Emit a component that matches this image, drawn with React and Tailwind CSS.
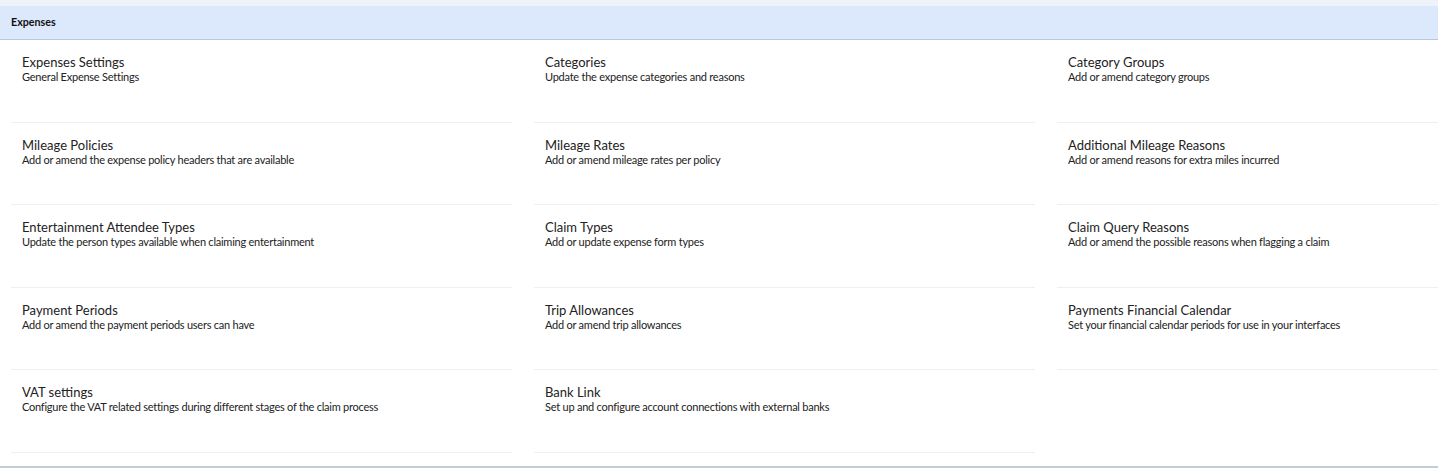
const items = [
  ["Expenses Settings", "General Expense Settings"],
  ["Categories", "Update the expense categories and reasons"],
  ["Category Groups", "Add or amend category groups"],
  ["Mileage Policies", "Add or amend the expense policy headers that are available"],
  ["Mileage Rates", "Add or amend mileage rates per policy"],
  ["Additional Mileage Reasons", "Add or amend reasons for extra miles incurred"],
  ["Entertainment Attendee Types", "Update the person types available when claiming entertainment"],
  ["Claim Types", "Add or update expense form types"],
  ["Claim Query Reasons", "Add or amend the possible reasons when flagging a claim"],
  ["Payment Periods", "Add or amend the payment periods users can have"],
  ["Trip Allowances", "Add or amend trip allowances"],
  ["Payments Financial Calendar", "Set your financial calendar periods for use in your interfaces"],
  ["VAT settings", "Configure the VAT related settings during different stages of the claim process"],
  ["Bank Link", "Set up and configure account connections with external banks"],
];

export default function App() {
  return (
    <div className="w-[1438px] h-[471px] overflow-hidden bg-white font-['Lato','Liberation_Sans',sans-serif] text-[#1f1f1f]">
      <div className="h-[6px] bg-[#eef2f9]" />
      <div className="h-[34px] bg-[#dce8fb] border-b border-[#b9c7dc] flex items-center px-[11px]">
        <span className="text-[10.7px] font-bold text-[#111]">Expenses</span>
      </div>
      <div className="h-[428px] border-b-2 border-[#c5ccd8] overflow-hidden pl-[11px]">
        <div className="grid grid-cols-[501px_501px_501px] gap-x-[22px]">
          {items.map(([title, desc]) => (
            <div key={title} className="h-[82.5px] border-b border-[#efefef] pl-[11px] pt-[14px]">
              <div className="text-[13px] leading-[16px] text-[#222]">{title}</div>
              <div className="text-[11px] leading-[14px] tracking-[-0.24px] text-[#222]">{desc}</div>
            </div>
          ))}
        </div>
      </div>
    </div>
  );
}
